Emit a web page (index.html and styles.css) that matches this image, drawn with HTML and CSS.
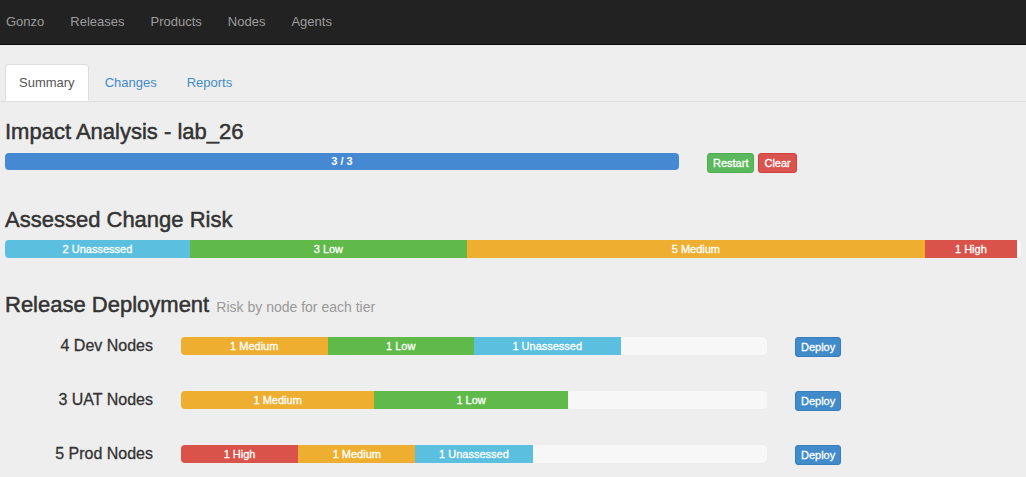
FILE: index.html
```html
<!DOCTYPE html>
<html>
<head>
<meta charset="utf-8">
<title>Gonzo - Impact Analysis</title>
<link rel="stylesheet" href="styles.css">
</head>
<body>
<nav class="navbar">
  <a class="nav-link brand" href="#">Gonzo</a>
  <a class="nav-link" href="#">Releases</a>
  <a class="nav-link" href="#">Products</a>
  <a class="nav-link" href="#">Nodes</a>
  <a class="nav-link" href="#">Agents</a>
</nav>
<div class="page">
  <ul class="tabs">
    <li class="tab active"><a href="#">Summary</a></li>
    <li class="tab"><a href="#">Changes</a></li>
    <li class="tab"><a href="#">Reports</a></li>
  </ul>

  <h3 class="title first">Impact Analysis - lab_26</h3>
  <div class="impact-row">
    <div class="progress progress-main">
      <div class="bar primary" style="width:100%">3 / 3</div>
    </div>
    <div class="btn-group">
      <button class="btn success">Restart</button>
      <button class="btn danger">Clear</button>
    </div>
  </div>

  <h3 class="title">Assessed Change Risk</h3>
  <div class="progress progress-full">
    <div class="bar info" style="width:18.2%">2 Unassessed</div>
    <div class="bar success" style="width:27.26%">3 Low</div>
    <div class="bar warning" style="width:45.08%">5 Medium</div>
    <div class="bar danger" style="width:9.06%">1 High</div>
  </div>

  <h3 class="title">Release Deployment <small class="subtitle">Risk by node for each tier</small></h3>
  <div class="tiers">
    <div class="tier">
      <div class="tier-label">4 Dev Nodes</div>
      <div class="progress progress-tier">
        <div class="bar warning" style="width:25%">1 Medium</div>
        <div class="bar success" style="width:25%">1 Low</div>
        <div class="bar info" style="width:25%">1 Unassessed</div>
      </div>
      <button class="btn primary">Deploy</button>
    </div>
    <div class="tier">
      <div class="tier-label">3 UAT Nodes</div>
      <div class="progress progress-tier">
        <div class="bar warning" style="width:33%">1 Medium</div>
        <div class="bar success" style="width:33%">1 Low</div>
      </div>
      <button class="btn primary">Deploy</button>
    </div>
    <div class="tier">
      <div class="tier-label">5 Prod Nodes</div>
      <div class="progress progress-tier">
        <div class="bar danger" style="width:20%">1 High</div>
        <div class="bar warning" style="width:20%">1 Medium</div>
        <div class="bar info" style="width:20%">1 Unassessed</div>
      </div>
      <button class="btn primary">Deploy</button>
    </div>
  </div>
</div>
</body>
</html>
```

FILE: styles.css
```css
* { box-sizing: border-box; }

body {
  margin: 0;
  background: #eeeeee;
  font-family: "Liberation Sans", Arial, sans-serif;
  color: #333333;
}

.navbar {
  height: 45px;
  background: #222222;
  border-bottom: 1px solid #0a0a0a;
  display: flex;
  align-items: flex-start;
  gap: 26px;
  padding-left: 6px;
}

.nav-link {
  font-size: 13px;
  line-height: 44px;
  color: #9d9d9d;
  text-decoration: none;
}

.page {
  padding: 0 5px;
}

.tabs {
  list-style: none;
  margin: 19px -5px 0 -5px;
  padding: 0 5px;
  display: flex;
  border-bottom: 1px solid #dddddd;
  height: 38px;
}

.tab {
  margin-right: 2px;
  margin-bottom: -1px;
}

.tab a {
  display: block;
  font-size: 13px;
  line-height: 17px;
  padding: 9px 13px;
  border: 1px solid transparent;
  border-radius: 4px 4px 0 0;
  color: #428bca;
  text-decoration: none;
}

.tab.active a {
  background: #ffffff;
  border-color: #dddddd;
  border-bottom-color: #ffffff;
  color: #555555;
}

.title {
  margin: 35px 0 8px 0;
  font-size: 22px;
  line-height: 24px;
  font-weight: normal;
  color: #333333;
  -webkit-text-stroke: 0.5px #333333;
}

.title.first {
  margin-top: 18px;
  margin-bottom: 9px;
}

.subtitle {
  font-size: 14px;
  color: #999999;
  margin-left: 1px;
  -webkit-text-stroke: 0;
}

.progress {
  display: flex;
  height: 18px;
  border-radius: 4px;
  overflow: hidden;
  background: #f7f7f7;
}

.bar {
  height: 100%;
  color: #ffffff;
  font-size: 11px;
  line-height: 18px;
  text-align: center;
  white-space: nowrap;
  overflow: hidden;
  -webkit-text-stroke: 0.3px #ffffff;
}

.bar.primary { background: #4589d2; }
.bar.info { background: #5bbfe0; }
.bar.success { background: #5fba4a; }
.bar.warning { background: #eeae30; }
.bar.danger { background: #d9534a; }

.impact-row {
  display: flex;
  align-items: flex-start;
  gap: 28px;
}

.progress-main {
  width: 674px;
  height: 17px;
}

.progress-main .bar {
  line-height: 17px;
  font-weight: bold;
  -webkit-text-stroke: 0;
}

.progress-full {
  width: 100%;
}

.btn-group {
  display: flex;
  gap: 4px;
}

.btn {
  font-family: "Liberation Sans", Arial, sans-serif;
  font-size: 11px;
  line-height: 16px;
  padding: 1px 5px;
  border: 1px solid transparent;
  border-radius: 3px;
  color: #ffffff;
  cursor: pointer;
  -webkit-text-stroke: 0.3px #ffffff;
}

.btn.success { background: #5cb85c; border-color: #4cae4c; }
.btn.danger { background: #d9534f; border-color: #d43f3a; }
.btn.primary { background: #428bca; border-color: #357ebd; }

.tiers {
  margin-top: 18px;
  display: flex;
  flex-direction: column;
  gap: 34px;
}

.tier {
  display: flex;
  align-items: flex-start;
}

.tier-label {
  width: 148px;
  text-align: right;
  font-size: 16px;
  line-height: 18px;
  color: #333333;
  -webkit-text-stroke: 0.3px #333333;
}

.progress-tier {
  width: 586px;
  margin-left: 28px;
  margin-right: 28px;
}
```
